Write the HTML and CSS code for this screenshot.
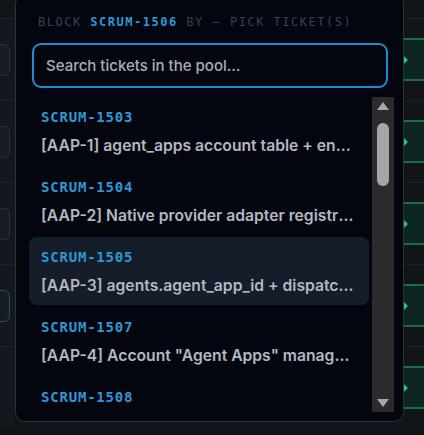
FILE: index.html
```html
<!DOCTYPE html>
<html lang="en">
<head>
  <meta charset="UTF-8" />
  <meta name="viewport" content="width=device-width, initial-scale=1" />
  <title>Block ticket picker</title>
  <link rel="stylesheet" href="styles.css">
</head>
<body>

<div class="board">
  <div class="board-row">
    <div class="cell-left"><span class="field"></span></div>
    <div class="cell-right"><span class="go"><svg width="9" height="10" viewBox="0 0 9 10"><path d="M0.5 5h7M4 1.5l3.5 3.5-3.5 3.5" fill="none" stroke="#27c97a" stroke-width="2"/></svg></span></div>
  </div>
  <div class="board-row">
    <div class="cell-left"><span class="field"></span></div>
    <div class="cell-right"><span class="go"><svg width="9" height="10" viewBox="0 0 9 10"><path d="M0.5 5h7M4 1.5l3.5 3.5-3.5 3.5" fill="none" stroke="#27c97a" stroke-width="2"/></svg></span></div>
  </div>
  <div class="board-row">
    <div class="cell-left"><span class="field"></span></div>
    <div class="cell-right"><span class="go"><svg width="9" height="10" viewBox="0 0 9 10"><path d="M0.5 5h7M4 1.5l3.5 3.5-3.5 3.5" fill="none" stroke="#27c97a" stroke-width="2"/></svg></span></div>
  </div>
  <div class="board-row">
    <div class="cell-left"><span class="field done"></span></div>
    <div class="cell-right"><span class="go"><svg width="9" height="10" viewBox="0 0 9 10"><path d="M0.5 5h7M4 1.5l3.5 3.5-3.5 3.5" fill="none" stroke="#27c97a" stroke-width="2"/></svg></span></div>
  </div>
  <div class="board-row">
    <div class="cell-left"></div>
    <div class="cell-right"><span class="go"><svg width="9" height="10" viewBox="0 0 9 10"><path d="M0.5 5h7M4 1.5l3.5 3.5-3.5 3.5" fill="none" stroke="#27c97a" stroke-width="2"/></svg></span></div>
  </div>
</div>

<div class="picker">
  <div class="picker-title">BLOCK <b>SCRUM-1506</b> BY — PICK TICKET(S)</div>
  <input class="search" type="text" placeholder="Search tickets in the pool…" />

  <div class="list-wrap">
    <div class="list">
      <div class="ticket">
        <div class="ticket-key">SCRUM-1503</div>
        <div class="ticket-name">[AAP-1] agent_apps account table + endpoints for linked accounts</div>
      </div>
      <div class="ticket">
        <div class="ticket-key">SCRUM-1504</div>
        <div class="ticket-name">[AAP-2] Native provider adapter registry and loader</div>
      </div>
      <div class="ticket active">
        <div class="ticket-key">SCRUM-1505</div>
        <div class="ticket-name">[AAP-3] agents.agent_app_id + dispatcher routing</div>
      </div>
      <div class="ticket">
        <div class="ticket-key">SCRUM-1507</div>
        <div class="ticket-name">[AAP-4] Account "Agent Apps" management page</div>
      </div>
      <div class="ticket">
        <div class="ticket-key">SCRUM-1508</div>
        <div class="ticket-name">[AAP-5] Provider health checks and status</div>
      </div>
    </div>
    <div class="scrollbar">
      <span class="arrow-up"></span>
      <div class="track"><span class="thumb"></span></div>
      <span class="arrow-down"></span>
    </div>
  </div>
</div>

</body>
</html>
```

FILE: styles.css
```css
body {
  margin: 0;
  width: 424px;
  height: 435px;
  overflow: hidden;
  background: #111419;
  font-family: Inter, "Noto Sans", sans-serif;
  position: relative;
}

/* board behind the popup */
.board {
  padding-top: 18px;
}

.board-row {
  height: 82px;
  border-top: 1px solid #1d2129;
  display: flex;
  justify-content: space-between;
  align-items: center;
  box-sizing: border-box;
}

.cell-left {
  width: 15px;
  height: 100%;
  display: flex;
  align-items: center;
  background: #14171d;
}

.field {
  display: block;
  width: 30px;
  height: 30px;
  margin-left: -22px;
  border: 1px solid #2a2f39;
  border-radius: 6px;
  background: #181c23;
}

.field.done {
  border-color: #1f5846;
}

.cell-right {
  width: 30px;
  height: 100%;
  display: flex;
  align-items: center;
}

.go {
  display: flex;
  align-items: center;
  width: 100%;
  height: 43px;
  padding-left: 5px;
  box-sizing: border-box;
  background: #0e2623;
  border-top: 2px solid #1b6a52;
  border-bottom: 2px solid #1b6a52;
}

/* popup */
.picker {
  position: absolute;
  left: 15px;
  top: -6px;
  width: 389px;
  height: 428px;
  box-sizing: border-box;
  padding: 19px 15px 0 16px;
  background: #04060f;
  border: 1px solid #2a3140;
  border-radius: 10px;
}

.picker-title {
  font-family: "DejaVu Sans Mono", monospace;
  font-size: 12px;
  line-height: 16px;
  letter-spacing: 1.5px;
  color: #3a414e;
  padding-left: 6px;
  white-space: nowrap;
}

.picker-title b {
  color: #2f9ad6;
}

.search {
  display: block;
  width: 100%;
  height: 45px;
  margin-top: 13px;
  box-sizing: border-box;
  padding: 0 12px;
  border: 2px solid #1b8dd0;
  border-radius: 9px;
  background: #04060f;
  font-family: Inter, "Noto Sans", sans-serif;
  font-size: 15px;
  font-weight: 500;
  color: #d0d4da;
  outline: none;
}

.search::placeholder {
  color: #a9aeb7;
}

.list-wrap {
  display: flex;
  gap: 3px;
  margin: 9px -6px 0 -3px;
  height: 315px;
}

.list {
  flex: 1;
  min-width: 0;
  overflow: hidden;
  display: flex;
  flex-direction: column;
  gap: 2px;
}

.ticket {
  flex-shrink: 0;
  height: 68px;
  box-sizing: border-box;
  padding: 10px 12px;
  border-radius: 8px;
}

.ticket.active {
  background: #151c2a;
}

.ticket-key {
  font-family: "DejaVu Sans Mono", monospace;
  font-size: 14px;
  font-weight: bold;
  line-height: 20px;
  letter-spacing: 0.8px;
  color: #3197d3;
}

.ticket-name {
  margin-top: 8px;
  font-size: 15.7px;
  font-weight: 600;
  line-height: 21px;
  color: #b3b8c1;
  white-space: nowrap;
  overflow: hidden;
  text-overflow: ellipsis;
}

/* scrollbar drawn by hand */
.scrollbar {
  width: 22px;
  background: #2b2b2b;
  display: flex;
  flex-direction: column;
  align-items: center;
  padding: 5px 0;
  box-sizing: border-box;
}

.arrow-up,
.arrow-down {
  width: 0;
  height: 0;
  border-left: 6px solid transparent;
  border-right: 6px solid transparent;
}

.arrow-up {
  border-bottom: 8px solid #a8a8a8;
}

.arrow-down {
  border-top: 8px solid #a8a8a8;
}

.track {
  flex: 1;
  width: 100%;
  display: flex;
  justify-content: center;
  padding-top: 13px;
}

.thumb {
  width: 12px;
  height: 63px;
  border-radius: 6px;
  background: #a6a6a6;
}
```
